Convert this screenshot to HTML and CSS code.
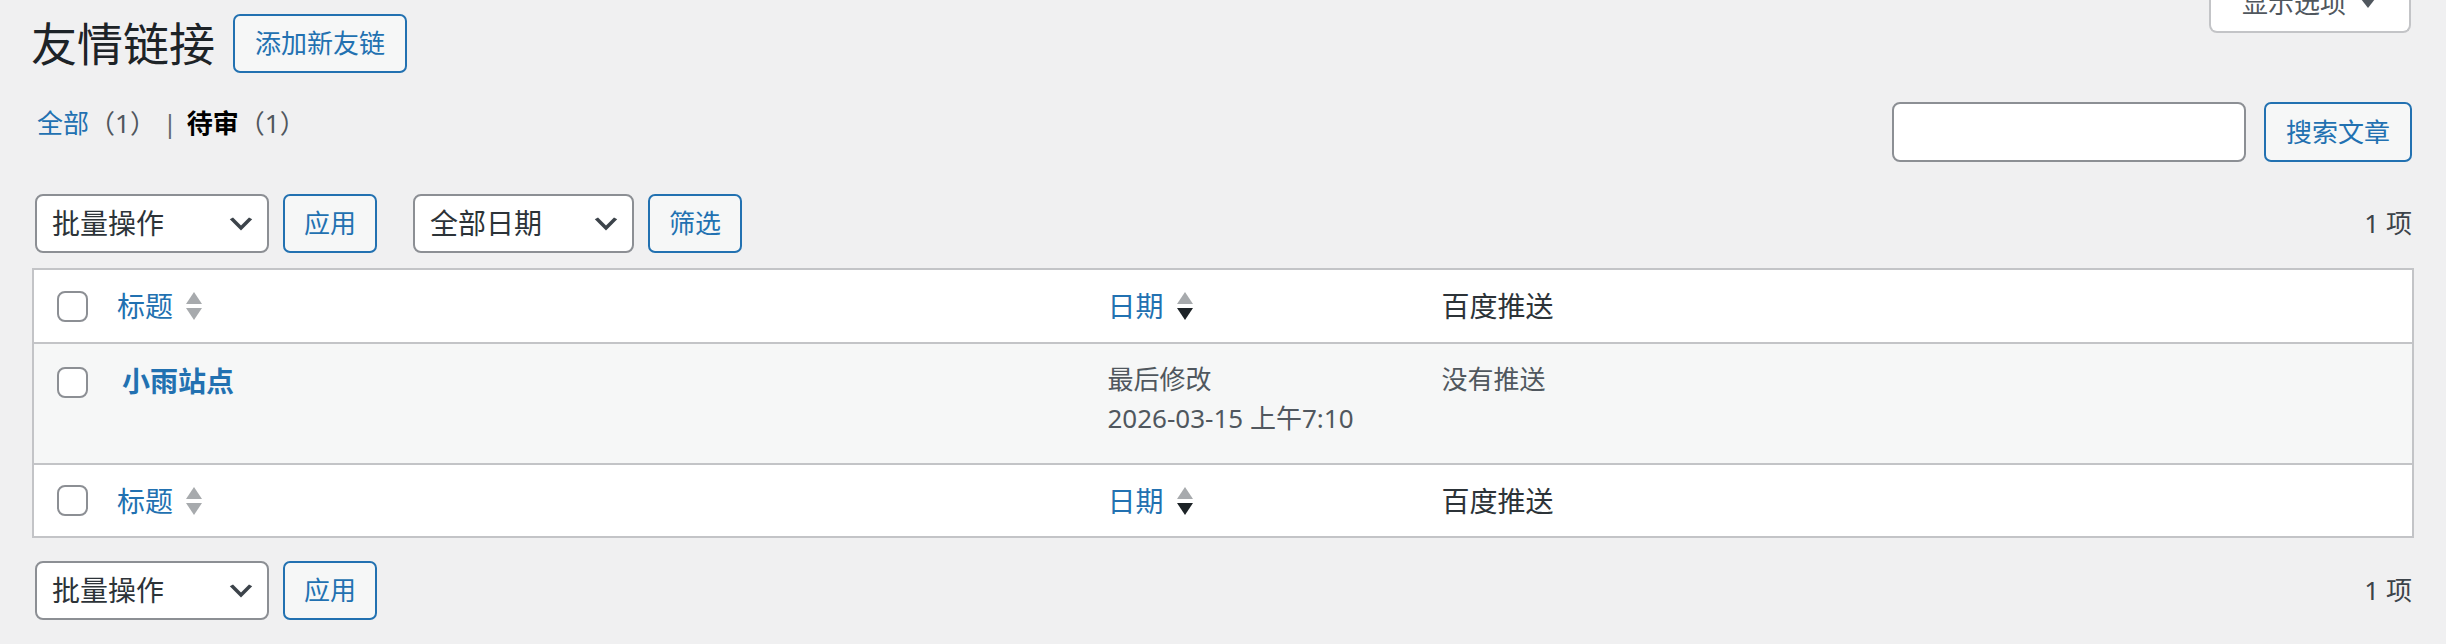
FILE: index.html
```html
<!DOCTYPE html>
<html lang="zh-CN">
<head>
<meta charset="utf-8">
<title>友情链接</title>
<link rel="stylesheet" href="styles.css">
</head>
<body>
<div class="wrap">
  <div class="screen-meta-links">
    <button class="show-settings" type="button">显示选项<svg class="tri-down" width="14" height="9" viewBox="0 0 14 9"><polygon points="0,0 14,0 7,9" fill="#50575e"/></svg></button>
  </div>
  <div class="title-row">
    <h1 class="page-title">友情链接</h1>
    <a class="page-title-action" href="#">添加新友链</a>
  </div>

  <div class="filter-row">
    <ul class="subsubsub">
      <li><a href="#">全部<span class="count">（1）</span></a> |</li>
      <li><a class="current" href="#">待审<span class="count">（1）</span></a></li>
    </ul>
    <div class="search-box">
      <input class="search-input" type="search">
      <button class="button" type="button">搜索文章</button>
    </div>
  </div>

  <div class="tablenav top">
    <div class="tablenav-left">
      <div class="actions">
        <div class="select select-bulk"><span>批量操作</span><svg class="chev" width="32" height="32" viewBox="0 0 20 20"><path d="M5 6l5 5 5-5 2 1-7 7-7-7 2-1z" fill="#3c434a"/></svg></div>
        <button class="button" type="button">应用</button>
      </div>
      <div class="actions">
        <div class="select select-date"><span>全部日期</span><svg class="chev" width="32" height="32" viewBox="0 0 20 20"><path d="M5 6l5 5 5-5 2 1-7 7-7-7 2-1z" fill="#3c434a"/></svg></div>
        <button class="button" type="button">筛选</button>
      </div>
    </div>
    <span class="displaying-num">1 项</span>
  </div>

  <table class="list-table">
    <thead>
      <tr>
        <th class="check-column"><input class="cb" type="checkbox"></th>
        <th class="column-title"><a class="sort-link" href="#"><span>标题</span><svg class="sort-ind" width="16" height="30" viewBox="0 0 16 30"><polygon points="0,13 8,1 16,13" fill="#a7aaad"/><polygon points="0,17 16,17 8,29" fill="#a7aaad"/></svg></a></th>
        <th class="column-date"><a class="sort-link" href="#"><span>日期</span><svg class="sort-ind" width="16" height="30" viewBox="0 0 16 30"><polygon points="0,13 8,1 16,13" fill="#a7aaad"/><polygon points="0,17 16,17 8,29" fill="#1d2327"/></svg></a></th>
        <th class="column-baidu">百度推送</th>
      </tr>
    </thead>
    <tbody>
      <tr>
        <td class="check-column"><input class="cb" type="checkbox"></td>
        <td class="cell-title"><strong><a class="row-title" href="#">小雨站点</a></strong></td>
        <td class="cell-date">最后修改<br>2026-03-15 上午7:10</td>
        <td class="cell-baidu">没有推送</td>
      </tr>
    </tbody>
    <tfoot>
      <tr>
        <th class="check-column"><input class="cb" type="checkbox"></th>
        <th class="column-title"><a class="sort-link" href="#"><span>标题</span><svg class="sort-ind" width="16" height="30" viewBox="0 0 16 30"><polygon points="0,13 8,1 16,13" fill="#a7aaad"/><polygon points="0,17 16,17 8,29" fill="#a7aaad"/></svg></a></th>
        <th class="column-date"><a class="sort-link" href="#"><span>日期</span><svg class="sort-ind" width="16" height="30" viewBox="0 0 16 30"><polygon points="0,13 8,1 16,13" fill="#a7aaad"/><polygon points="0,17 16,17 8,29" fill="#1d2327"/></svg></a></th>
        <th class="column-baidu">百度推送</th>
      </tr>
    </tfoot>
  </table>

  <div class="tablenav bottom">
    <div class="tablenav-left">
      <div class="actions">
        <div class="select select-bulk"><span>批量操作</span><svg class="chev" width="32" height="32" viewBox="0 0 20 20"><path d="M5 6l5 5 5-5 2 1-7 7-7-7 2-1z" fill="#3c434a"/></svg></div>
        <button class="button" type="button">应用</button>
      </div>
    </div>
    <span class="displaying-num">1 项</span>
  </div>
</div>
</body>
</html>
```

FILE: styles.css
```css
* { box-sizing: border-box; }
html, body { margin: 0; padding: 0; }
body {
  background: #f0f0f1;
  font-family: "Noto Sans", "Noto Sans CJK SC", sans-serif;
  color: #3c434a;
  font-size: 26px;
  line-height: 39px;
}
a { text-decoration: none; color: #2271b1; }

.wrap { padding: 0 32px; }

/* screen options tab */
.screen-meta-links { float: right; margin-top: -29px; margin-right: 3px; }
.show-settings {
  display: flex;
  align-items: center;
  height: 62px;
  padding: 12px 34px 8px 31px;
  background: #fff;
  border: 2px solid #c3c4c7;
  border-top: none;
  border-radius: 0 0 8px 8px;
  color: #50575e;
  font-family: inherit;
  font-size: 26px;
  line-height: 40px;
}
.tri-down { margin-left: 15px; }

/* title row */
.title-row { display: flex; align-items: center; padding-top: 14px; }
.page-title {
  margin: 0 0 0 -1px;
  font-size: 46px;
  line-height: 59px;
  font-weight: 400;
  color: #1d2327;
}
.page-title-action {
  display: inline-flex;
  align-items: center;
  height: 59px;
  margin-left: 18px;
  padding: 0 20px;
  border: 2px solid #2271b1;
  border-radius: 7px;
  background: #f6f7f7;
  color: #2271b1;
  font-size: 26px;
}

/* filter row */
.filter-row {
  display: flex;
  justify-content: space-between;
  align-items: flex-start;
  margin-top: 29px;
}
.subsubsub {
  list-style: none;
  margin: 2px 0 0 5px;
  padding: 0;
  color: #646970;
  font-size: 26px;
  line-height: 39px;
}
.subsubsub li { display: inline; }
.subsubsub .count { color: #50575e; }
.subsubsub .current { margin-left: 3px; color: #000; font-weight: 700; }
.subsubsub .current .count { font-weight: 400; }

.search-box { display: flex; gap: 18px; margin-right: 2px; }
.search-input {
  width: 354px;
  height: 60px;
  margin: 0;
  border: 2px solid #8c8f94;
  border-radius: 8px;
  background: #fff;
}
.button {
  height: 60px;
  margin: 0;
  padding: 0 20px;
  border: 2px solid #2271b1;
  border-radius: 7px;
  background: #f6f7f7;
  color: #2271b1;
  font-family: inherit;
  font-size: 26px;
  line-height: 56px;
}

/* tablenav */
.tablenav {
  display: flex;
  align-items: center;
  justify-content: space-between;
}
.tablenav.top { margin-top: 32px; margin-bottom: 15px; }
.tablenav.bottom { margin-top: 23px; }
.tablenav-left { display: flex; align-items: center; gap: 36px; margin-left: 3px; }
.actions { display: flex; align-items: center; gap: 14px; }
.actions .button { height: 59px; padding: 0 19px; line-height: 55px; }
.select {
  display: flex;
  align-items: center;
  justify-content: space-between;
  height: 59px;
  padding: 0 10px 0 15px;
  border: 2px solid #8c8f94;
  border-radius: 8px;
  background: #fff;
  color: #2c3338;
  font-size: 28px;
}
.select-bulk { width: 234px; }
.select-date { width: 221px; }
.chev { display: block; }
.displaying-num { margin-right: 2px; color: #3c434a; font-size: 26px; }

/* table */
.list-table {
  width: 100%;
  table-layout: fixed;
  border-collapse: separate;
  border-spacing: 0;
  border: 2px solid #c3c4c7;
  background: #fff;
}
.list-table th {
  padding: 16px 20px;
  text-align: left;
  font-weight: 400;
  font-size: 28px;
  line-height: 40px;
  color: #2c3338;
  vertical-align: middle;
}
.list-table thead th { border-bottom: 2px solid #c3c4c7; }
.list-table tfoot th { padding-bottom: 15px; }
.list-table th.check-column { width: 63px; padding: 0 0 0 23px; }
.list-table th.column-date { width: 334px; }
.sort-link { display: inline-flex; align-items: center; gap: 13px; color: #2271b1; }
.sort-ind { display: block; }

.list-table td {
  padding: 16px 20px 25px;
  vertical-align: top;
  background: #f6f7f7;
  border-bottom: 2px solid #c3c4c7;
  color: #50575e;
  font-size: 26px;
  line-height: 39px;
}
.list-table td.check-column { padding: 23px 0 0 23px; }
.list-table td.cell-title { padding-left: 25px; }
.row-title { font-size: 28px; line-height: 42px; font-weight: 700; color: #2271b1; }

.cb {
  -webkit-appearance: none;
  appearance: none;
  display: block;
  width: 31px;
  height: 31px;
  margin: 0;
  border: 2px solid #8c8f94;
  border-radius: 8px;
  background: #fff;
}
```
